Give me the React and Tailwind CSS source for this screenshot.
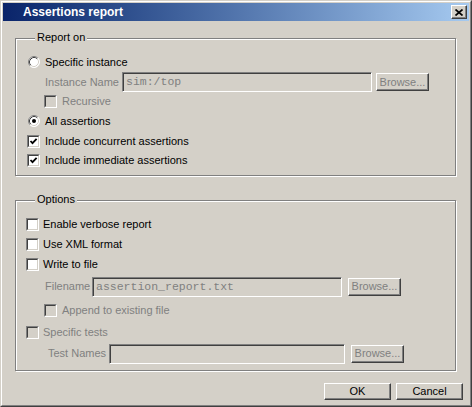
import React from 'react';

const raised = 'border border-t-white border-l-white border-b-[#404040] border-r-[#404040] shadow-[inset_-1px_-1px_0_#808080]';

function CheckBox({ checked = false, disabled = false }) {
  return (
    <span className="flex w-[13px] h-[13px] shrink-0 border border-t-[#808080] border-l-[#808080] border-b-white border-r-white">
      <span
        className={
          'flex flex-1 items-center justify-center border border-t-[#404040] border-l-[#404040] border-b-[#d4d0c8] border-r-[#d4d0c8] ' +
          (disabled ? 'bg-[#d4d0c8]' : 'bg-white')
        }
      >
        {checked && (
          <svg width="9" height="9" viewBox="0 0 9 9">
            <path d="M1.5 4 L3.5 6.2 L7.6 1.8" fill="none" stroke="#000" strokeWidth="1.8" />
          </svg>
        )}
      </span>
    </span>
  );
}

function Radio({ checked = false }) {
  return (
    <svg width="12" height="12" viewBox="0 0 12 12" className="shrink-0">
      <circle cx="6" cy="6" r="5.5" fill="#fff" />
      <path d="M2.11 9.89 A5.5 5.5 0 0 1 9.89 2.11" fill="none" stroke="#808080" />
      <path d="M9.89 2.11 A5.5 5.5 0 0 1 2.11 9.89" fill="none" stroke="#fff" />
      <path d="M2.82 9.18 A4.5 4.5 0 0 1 9.18 2.82" fill="none" stroke="#404040" />
      <path d="M9.18 2.82 A4.5 4.5 0 0 1 2.82 9.18" fill="none" stroke="#d4d0c8" />
      {checked && <circle cx="6" cy="6" r="2" fill="#000" />}
    </svg>
  );
}

function Field({ value, width }) {
  return (
    <div
      className={
        'flex items-center h-[20px] pl-[3px] border border-t-[#808080] border-l-[#808080] border-b-white border-r-white shadow-[inset_1px_1px_0_#404040] bg-[#d4d0c8] ' +
        width
      }
    >
      <span className="font-['Liberation_Mono',monospace] text-[11.5px] text-[#808080] leading-none">{value}</span>
    </div>
  );
}

function Browse({ className }) {
  return (
    <div className={'flex items-center justify-center w-[53px] h-[18px] text-[#808080] ' + raised + ' ' + className}>
      Browse...
    </div>
  );
}

function Group({ title, className, children }) {
  return (
    <div
      className={
        'relative w-[441px] border border-[#808080] shadow-[inset_1px_1px_0_#fff,1px_1px_0_#fff] ' + className
      }
    >
      <span className="absolute left-[19px] -top-[8px] px-[2px] bg-[#d4d0c8] leading-[13px]">{title}</span>
      {children}
    </div>
  );
}

export default function App() {
  return (
    <div className="w-[472px] h-[407px] border border-t-[#d4d0c8] border-l-[#d4d0c8] border-b-[#404040] border-r-[#404040] font-['Liberation_Sans',Arial,sans-serif] text-[11px] text-black">
      <div className="flex flex-col h-full p-[1px] bg-[#d4d0c8] border border-t-white border-l-white border-b-[#808080] border-r-[#808080]">
        <div className="flex items-center h-[18px] pl-[20px] pr-[2px] bg-linear-to-r from-[#0a246a] to-[#a6caf0]">
          <span className="flex-1 text-white font-bold text-[12px]">Assertions report</span>
          <div className={'flex items-center justify-center w-[16px] h-[14px] bg-[#d4d0c8] ' + raised}>
            <svg width="8" height="7" viewBox="0 0 8 7">
              <path d="M0.5 0.5 L7.5 6.5 M7.5 0.5 L0.5 6.5" stroke="#000" strokeWidth="1.7" />
            </svg>
          </div>
        </div>

        <div className="flex flex-col pl-[12px] pt-[17px]">
          <Group title="Report on" className="h-[138px] pt-[13px] pl-[11px]">
            <div className="flex items-center h-[20px]">
              <span className="ml-[1px]"><Radio /></span>
              <span className="ml-[5px]">Specific instance</span>
            </div>
            <div className="flex items-center h-[20px]">
              <span className="ml-[18px] w-[77px] text-[#808080]">Instance Name</span>
              <Field value="sim:/top" width="w-[250px]" />
              <Browse className="ml-[4px]" />
            </div>
            <div className="flex items-center h-[19px]">
              <span className="ml-[17px]"><CheckBox disabled /></span>
              <span className="ml-[5px] text-[#808080]">Recursive</span>
            </div>
            <div className="flex items-center h-[20px]">
              <span className="ml-[1px]"><Radio checked /></span>
              <span className="ml-[5px]">All assertions</span>
            </div>
            <div className="flex items-center h-[20px]">
              <CheckBox checked />
              <span className="ml-[5px]">Include concurrent assertions</span>
            </div>
            <div className="flex items-center h-[19px]">
              <CheckBox checked />
              <span className="ml-[5px]">Include immediate assertions</span>
            </div>
          </Group>

          <Group title="Options" className="mt-[24px] h-[171px] pt-[13px] pl-[10px]">
            <div className="flex items-center h-[20px]">
              <CheckBox />
              <span className="ml-[4px]">Enable verbose report</span>
            </div>
            <div className="flex items-center h-[20px]">
              <CheckBox />
              <span className="ml-[4px]">Use XML format</span>
            </div>
            <div className="flex items-center h-[21px]">
              <CheckBox />
              <span className="ml-[4px]">Write to file</span>
            </div>
            <div className="flex items-center h-[23px]">
              <span className="ml-[19px] w-[47px] text-[#808080]">Filename</span>
              <Field value="assertion_report.txt" width="w-[250px]" />
              <Browse className="ml-[6px] h-[17px]" />
            </div>
            <div className="flex items-center h-[24px]">
              <span className="ml-[18px]"><CheckBox disabled /></span>
              <span className="ml-[5px] text-[#808080]">Append to existing file</span>
            </div>
            <div className="flex items-center h-[20px]">
              <CheckBox disabled />
              <span className="ml-[4px] text-[#808080]">Specific tests</span>
            </div>
            <div className="flex items-center h-[23px]">
              <span className="ml-[22px] w-[61px] text-[#808080]">Test Names</span>
              <Field value="" width="w-[236px]" />
              <Browse className="ml-[6px] h-[17px]" />
            </div>
          </Group>

          <div className="flex justify-end gap-[5px] mt-[12px] pr-[6px]">
            <div className={'flex items-center justify-center w-[67px] h-[17px] ' + raised}>OK</div>
            <div className={'flex items-center justify-center w-[67px] h-[17px] ' + raised}>Cancel</div>
          </div>
        </div>
      </div>
    </div>
  );
}
